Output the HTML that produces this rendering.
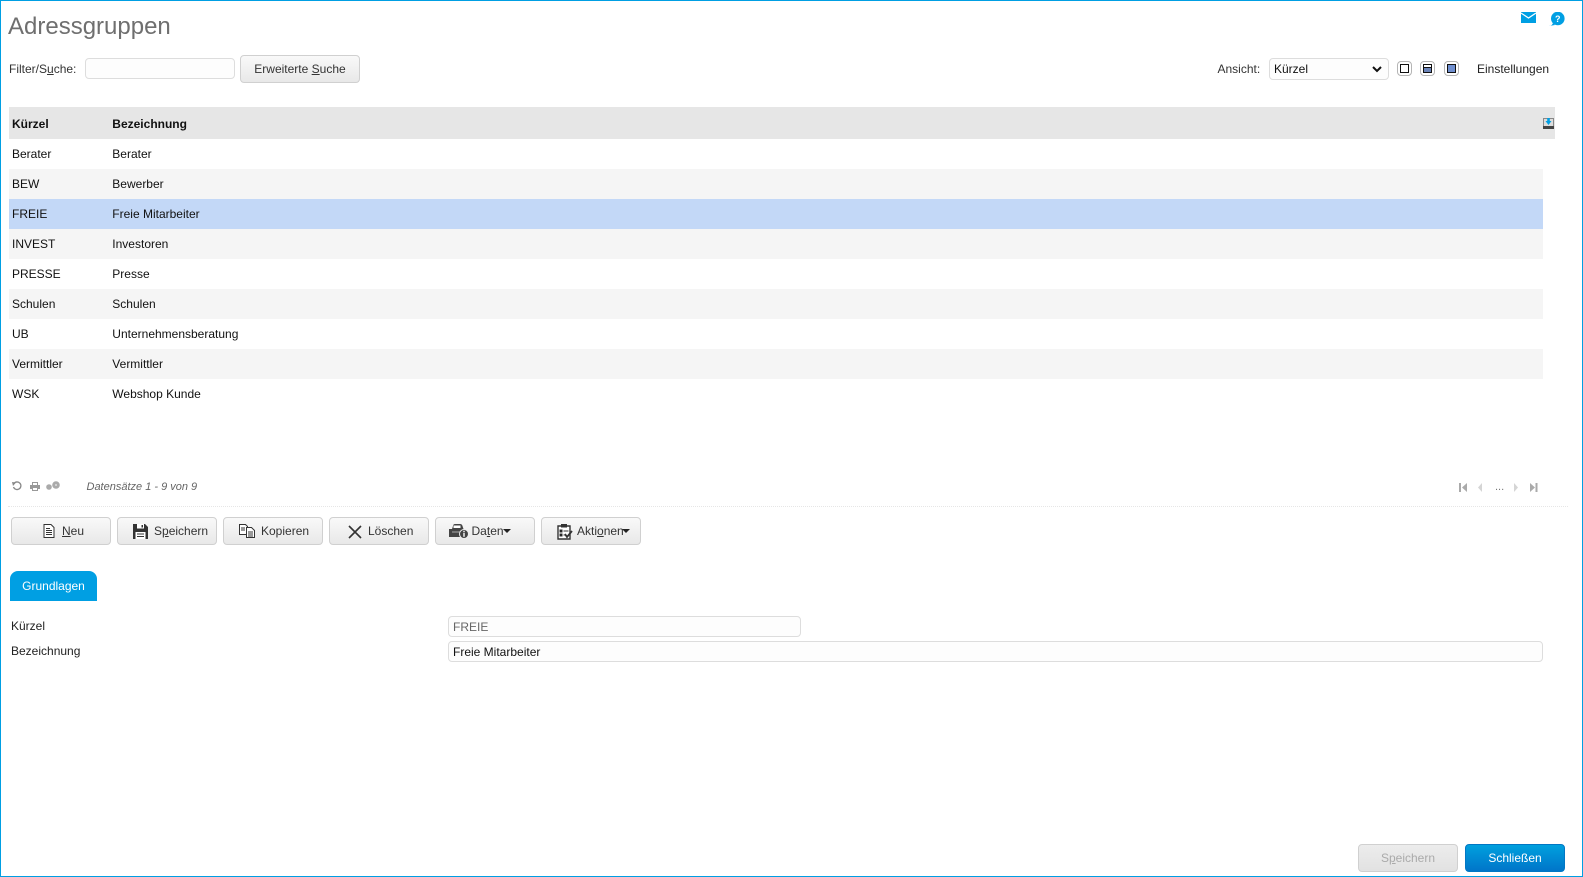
<!DOCTYPE html>
<html lang="de"><head><meta charset="utf-8"><title>Adressgruppen</title>
<style>
html,body{margin:0;padding:0;background:#fff}
body{position:relative;width:1583px;height:877px;overflow:hidden;font-family:"Liberation Sans",Arial,sans-serif;font-size:12px;color:#222}
.a{position:absolute;white-space:nowrap}
#frame{position:absolute;left:0;top:0;width:1581px;height:875px;border:1px solid #009fe3}
.t{line-height:14px}
.row{position:absolute;left:9px;width:1534px;height:30px;line-height:30px;color:#111}
.row span{position:absolute;top:0}
.row .c1{left:3px}.row .c2{left:103.3px}
.alt{background:#f5f5f5}.sel{background:#c3d8f7}
.btn{position:absolute;box-sizing:border-box;height:28px;width:100px;border:1px solid #d0d0d0;border-radius:4px;background:linear-gradient(#f9f9f9,#e8e8e8);text-align:center;line-height:26px;color:#333}
.ib{position:absolute;left:0;top:0}
.btn span.x{position:absolute;top:0;white-space:nowrap}
.inp{position:absolute;box-sizing:border-box;border:1px solid #ddd;border-radius:4px;background:#fdfdfd;height:21px;line-height:20px;padding-left:4px}
u{text-decoration:underline}
.v{position:absolute;top:61px;width:15px;height:15px;box-sizing:border-box;border:1px solid #b5b5b5;border-radius:4px;background:#fff}
.v i{position:absolute;left:2px;top:2px;width:9px;height:9px;box-sizing:border-box;border:1px solid #111;display:block}
</style></head><body>
<div id="frame"></div>

<div class="a" style="left:8px;top:13px;font-size:24px;line-height:28px;color:#6f6f6f">Adressgruppen</div>

<div class="a t" style="left:9px;top:62px;color:#333">Filter/S<u>u</u>che:</div>
<div class="inp" style="left:85px;top:58px;width:150px"></div>
<div class="btn" style="left:240px;top:55px;width:120px">Erweiterte <u>S</u>uche</div>

<div class="a t" style="left:1217.500px;top:62px;color:#333">Ansicht:</div>
<div class="inp" style="left:1269px;top:58px;width:120px;height:22px;color:#111;line-height:20px">Kürzel
<svg style="position:absolute;right:6px;top:7px" width="10" height="7" viewBox="0 0 10 7"><path d="M1 1l4 4 4-4" fill="none" stroke="#111" stroke-width="2"/></svg></div>
<div class="v" style="left:1397px"><i></i></div>
<div class="v" style="left:1420px"><i><b style="position:absolute;left:0;right:0;bottom:0;height:4px;background:#6b84b8;border-top:1px solid #111"></b></i></div>
<div class="v" style="left:1444px"><i style="background:#6f8fd0"></i></div>
<div class="a t" style="left:1477px;top:62px;color:#222">Einstellungen</div>

<svg class="a" style="left:1521px;top:12px" width="15" height="11" viewBox="0 0 15 11"><rect width="15" height="11" fill="#009fe3"/><path d="M0 1l7.500 5L15 1" fill="none" stroke="#fff" stroke-width="1.200"/></svg>
<svg class="a" style="left:1549px;top:12px" width="16" height="14" viewBox="0 0 16 14"><circle cx="8.800" cy="6.500" r="6.800" fill="#009fe3"/><path d="M0 14c2 0 3-1 4-3l2 2z" fill="#009fe3"/><text x="8.800" y="10" font-size="9" font-weight="700" text-anchor="middle" fill="#fff" font-family="Liberation Sans">?</text></svg>

<div class="a" style="left:9px;top:107px;width:1546px;height:32px;background:#e6e6e6;line-height:34px;font-weight:700;color:#111">
<span class="a" style="left:3px">Kürzel</span><span class="a" style="left:103.300px">Bezeichnung</span>
<svg class="a" style="left:1534px;top:11px" width="11" height="11" viewBox="0 0 11 11"><rect x=".5" y=".5" width="10" height="8" fill="#ddd" stroke="#888"/><rect x="0" y="8" width="11" height="3" fill="#444"/><path d="M4.200 0h2.600v3h1.700L5.500 7 2.500 3h1.700z" fill="#009fe3"/></svg>
</div>

<div class="row" style="top:139px"><span class="c1">Berater</span><span class="c2">Berater</span></div>
<div class="row alt" style="top:169px"><span class="c1">BEW</span><span class="c2">Bewerber</span></div>
<div class="row sel" style="top:199px"><span class="c1">FREIE</span><span class="c2">Freie Mitarbeiter</span></div>
<div class="row alt" style="top:229px"><span class="c1">INVEST</span><span class="c2">Investoren</span></div>
<div class="row" style="top:259px"><span class="c1">PRESSE</span><span class="c2">Presse</span></div>
<div class="row alt" style="top:289px"><span class="c1">Schulen</span><span class="c2">Schulen</span></div>
<div class="row" style="top:319px"><span class="c1">UB</span><span class="c2">Unternehmensberatung</span></div>
<div class="row alt" style="top:349px"><span class="c1">Vermittler</span><span class="c2">Vermittler</span></div>
<div class="row" style="top:379px"><span class="c1">WSK</span><span class="c2">Webshop Kunde</span></div>

<svg class="a" style="left:11px;top:480px" width="50" height="12" viewBox="0 0 50 12">
<path d="M3 3.500A3.800 3.800 0 1 1 2.500 7" fill="none" stroke="#888" stroke-width="1.300"/><path d="M1 2l4 .5L2 6z" fill="#888"/>
<path d="M21 5V2h6v3h2v4h-2v2h-6V9h-2V5z" fill="#999"/><rect x="22" y="3" width="4" height="2" fill="#fff"/><rect x="22" y="8" width="4" height="2" fill="#fff"/>
<circle cx="38" cy="7" r="2.800" fill="#aaa"/><circle cx="45" cy="5" r="3.800" fill="#aaa"/><circle cx="45" cy="5" r="1" fill="#ddd"/></svg>
<div class="a t" style="left:86.500px;top:480px;font-size:11px;font-style:italic;color:#666">Datensätze 1 - 9 von 9</div>

<svg class="a" style="left:1458px;top:482px" width="80" height="11" viewBox="0 0 80 11">
<path d="M1 1h2v9H1zM9 1v9L4 5.500z" fill="#aaa"/><path d="M24 1v9l-4-4.500z" fill="#d5d5d5"/><path d="M56 1v9l4-4.500z" fill="#d5d5d5"/><path d="M72 1v9l5-4.500zM77.500 1h2v9h-2z" fill="#aaa"/></svg>
<div class="a t" style="left:1495px;top:480px;font-size:11px;color:#777">...</div>

<div class="a" style="left:8px;top:506px;width:1560px;border-top:1px dotted #e6e6e6"></div>

<div class="btn" style="left:11px;top:517px"><svg class="ib" style="left:31px;top:6px" width="12" height="14" viewBox="0 0 12 14"><path d="M1 .5h7l3 3v10H1z" fill="#fff" stroke="#333"/><path d="M3 4.500h4M3 6.500h6M3 8.500h6M3 10.500h6" stroke="#333"/></svg><span class="x" style="left:50px"><u>N</u>eu</span></div>
<div class="btn" style="left:117px;top:517px"><svg class="ib" style="left:15px;top:6px" width="15" height="15" viewBox="0 0 15 15"><path d="M0 0h12l3 3v12H0z" fill="#333"/><rect x="4" y="0" width="7" height="4.500" fill="#fff"/><rect x="8.500" y="1" width="1.500" height="2.500" fill="#333"/><rect x="2.500" y="8" width="10" height="7" fill="#fff"/><path d="M4 10h7M4 12.500h7" stroke="#333"/></svg><span class="x" style="left:36px">S<u>p</u>eichern</span></div>
<div class="btn" style="left:223px;top:517px"><svg class="ib" style="left:15px;top:6px" width="16" height="14" viewBox="0 0 16 14"><path d="M.5.500h6l2 2v8H.5z" fill="#fff" stroke="#333"/><path d="M7.500 3.500h5l3 3v7h-8z" fill="#fff" stroke="#333"/><path d="M9 8h5M9 10h5M9 12h5M2 4h4M2 6h4" stroke="#333"/></svg><span class="x" style="left:37px">Kopieren</span></div>
<div class="btn" style="left:329px;top:517px"><svg class="ib" style="left:18px;top:7px" width="14" height="14" viewBox="0 0 14 14"><path d="M1 1l12 12M13 1L1 13" stroke="#333" stroke-width="1.600"/></svg><span class="x" style="left:38px">Löschen</span></div>
<div class="btn" style="left:435px;top:517px"><svg class="ib" style="left:13px;top:6px" width="20" height="15" viewBox="0 0 20 15"><path d="M3 5l1-3q.3-2 2-2h5q2 0 2.500 2l1 3h1v8H0V5z" fill="#444"/><rect x="4.500" y="1.500" width="7" height="2.500" fill="#fff"/><rect x="3" y="7" width="10" height="2" fill="#777"/><circle cx="15" cy="10" r="4.500" fill="#444" stroke="#eee"/><rect x="14.300" y="8.800" width="1.400" height="4" fill="#fff"/><rect x="14.300" y="6.800" width="1.400" height="1.300" fill="#fff"/></svg><span class="x" style="left:35.500px">Da<u>t</u>en</span><svg class="ib" style="left:67px;top:11px" width="8" height="4" viewBox="0 0 8 4"><path d="M0 0h8L4 4z" fill="#222"/></svg></div>
<div class="btn" style="left:541px;top:517px"><svg class="ib" style="left:15px;top:5px" width="16" height="17" viewBox="0 0 16 17"><path d="M1 3h12v13H1z" fill="#fff" stroke="#333" stroke-width="1.400"/><rect x="4" y="1" width="6" height="3.500" fill="#333"/><path d="M3 7h2v2H3zM3 11h2v2H3zM6.500 8h5M6.500 12h2" stroke="#333"/><path d="M8 11l2 3 5-6" fill="none" stroke="#333" stroke-width="1.800"/></svg><span class="x" style="left:35px">Akti<u>o</u>nen</span><svg class="ib" style="left:80px;top:11px" width="8" height="4" viewBox="0 0 8 4"><path d="M0 0h8L4 4z" fill="#222"/></svg></div>

<div class="a" style="left:10px;top:571px;width:87px;height:30px;background:#009fe3;border-radius:8px 8px 0 0;color:#fff;text-align:center;line-height:30px">Grundlagen</div>

<div class="a t" style="left:11px;top:619px;color:#222">Kürzel</div>
<div class="a t" style="left:11px;top:644px;color:#222">Bezeichnung</div>
<div class="inp" style="left:448px;top:616px;width:353px;color:#666;font-size:12px">FREIE</div>
<div class="inp" style="left:448px;top:641px;width:1095px;color:#111">Freie Mitarbeiter</div>

<div class="btn" style="left:1358px;top:844px;background:linear-gradient(#ececec,#e2e2e2);color:#aaa">S<u>p</u>eichern</div>
<div class="btn" style="left:1465px;top:844px;border:1px solid #0277c4;background:linear-gradient(#00a0de,#0075c9);color:#fff">Schließen</div>
</body></html>
